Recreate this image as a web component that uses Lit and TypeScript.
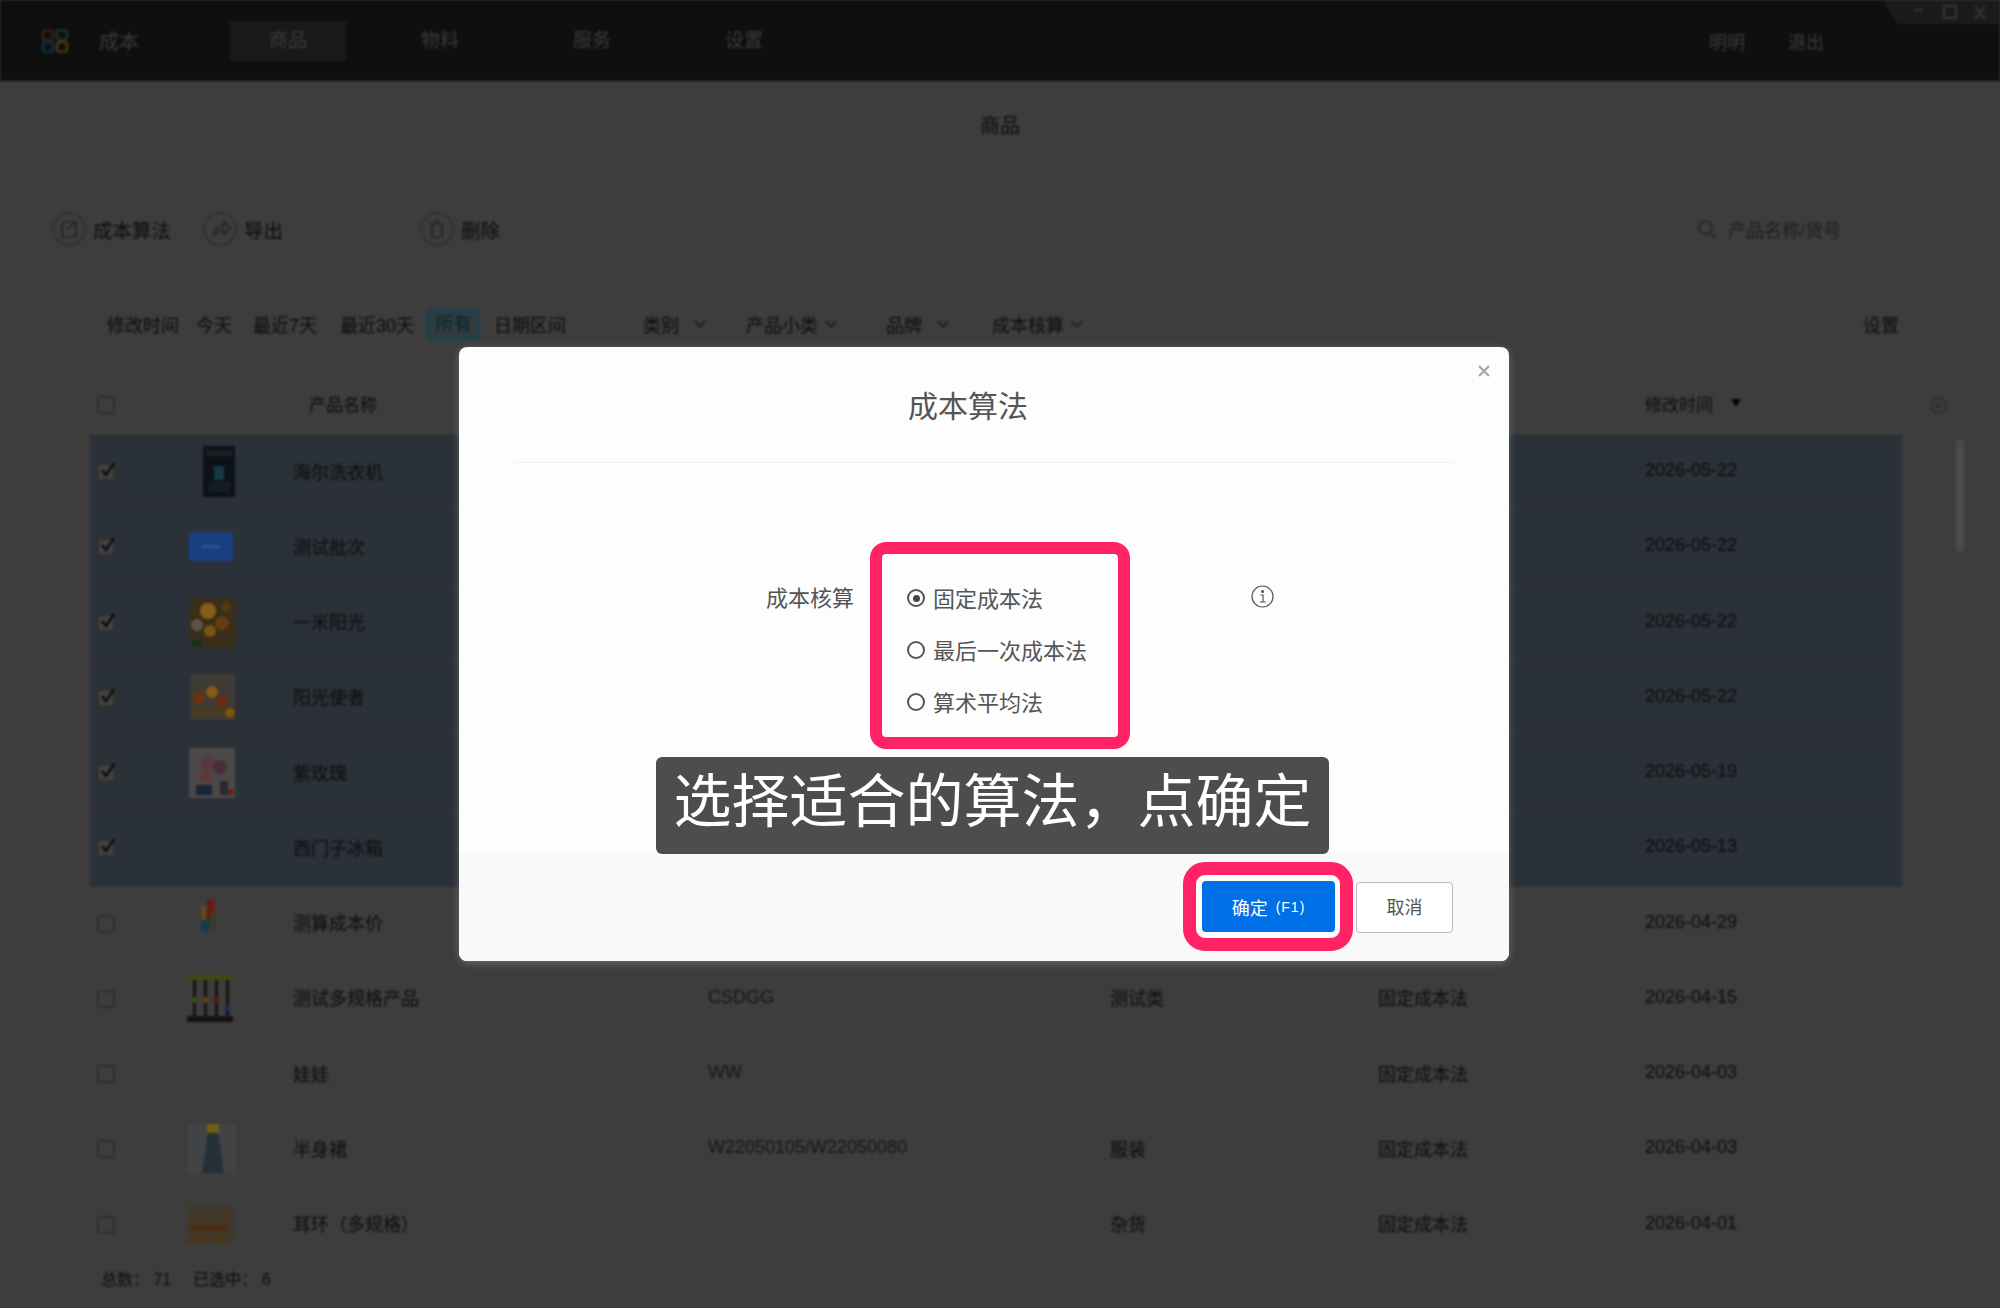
import { LitElement, html, svg, css } from "lit";
import { customElement } from "lit/decorators.js";

type Row = {
  name: string;
  code?: string;
  cat?: string;
  method?: string;
  date: string;
  on?: boolean;
  thumb?: any;
};

const THUMBS = {
  poster: svg`<rect x="19" y="4" width="32" height="51" fill="#0c1218"/><rect x="30" y="24" width="10" height="14" fill="#143a44"/><rect x="22" y="8" width="26" height="6" fill="#1c2024"/><rect x="24" y="40" width="22" height="10" fill="#161c24"/>`,
  blue: svg`<rect x="5" y="15" width="44" height="29" rx="2" fill="#193f80"/><rect x="18" y="28" width="18" height="3" fill="#2c5290"/>`,
  sun: svg`<rect x="6" y="5" width="46" height="50" fill="#3a2e1a"/><circle cx="24" cy="18" r="8" fill="#855f16"/><circle cx="38" cy="30" r="7" fill="#653c10"/><circle cx="13" cy="32" r="6" fill="#5c5648"/><circle cx="26" cy="38" r="6" fill="#7a5414"/><circle cx="42" cy="14" r="5" fill="#4e3a14"/><rect x="8" y="47" width="10" height="7" fill="#183020"/>`,
  box: svg`<rect x="6" y="6" width="45" height="46" fill="#3e3b34"/><circle cx="15" cy="30" r="6" fill="#702f10"/><circle cx="28" cy="24" r="6" fill="#855a14"/><circle cx="38" cy="33" r="6" fill="#6a2a10"/><rect x="10" y="40" width="30" height="7" fill="#483c1a"/><circle cx="46" cy="45" r="5" fill="#80540a"/>`,
  rose: svg`<rect x="5" y="5" width="46" height="50" fill="#4c4847"/><circle cx="24" cy="20" r="7" fill="#573840"/><circle cx="36" cy="24" r="7" fill="#4a2c38"/><circle cx="22" cy="33" r="6" fill="#5c3a3a"/><rect x="12" y="42" width="16" height="10" fill="#18263a"/><rect x="36" y="38" width="8" height="14" fill="#2a2a34"/><circle cx="47" cy="49" r="3" fill="#642014"/>`,
  abacus: svg`<rect x="17" y="12" width="5" height="24" fill="#644816"/><rect x="23" y="6" width="5" height="30" fill="#641a14"/><rect x="28" y="3" width="3" height="36" fill="#6e2214"/><rect x="17" y="26" width="8" height="12" fill="#163c55"/><rect x="26" y="20" width="4" height="18" fill="#22482e"/>`,
  beads: svg`<rect x="3" y="6" width="46" height="5" fill="#3c4a10"/><rect x="3" y="47" width="46" height="6" fill="#141414"/><rect x="9" y="11" width="3" height="36" fill="#141414"/><rect x="20" y="11" width="3" height="36" fill="#141414"/><rect x="31" y="11" width="3" height="36" fill="#141414"/><rect x="42" y="11" width="3" height="36" fill="#141414"/><rect x="8" y="28" width="5" height="6" fill="#324814"/><rect x="19" y="28" width="5" height="6" fill="#623c0c"/><rect x="30" y="28" width="5" height="6" fill="#5a1a14"/><rect x="41" y="36" width="5" height="6" fill="#143055"/>`,
  skirt: svg`<rect x="3" y="5" width="49" height="50" fill="#414345"/><rect x="23" y="5" width="12" height="9" fill="#6e6210"/><polygon points="24,14 34,14 40,54 18,54" fill="#242f38"/>`,
  ring: svg`<rect x="3" y="11" width="46" height="38" fill="#42382a"/><rect x="8" y="29" width="36" height="7" fill="#4a2c14"/><rect x="10" y="40" width="10" height="6" fill="#4a3416"/><rect x="30" y="40" width="10" height="6" fill="#4a3416"/>`,
};

const ROWS: Row[] = [
  { name: "海尔洗衣机", date: "2026-05-22", on: true, thumb: THUMBS.poster },
  { name: "测试批次", date: "2026-05-22", on: true, thumb: THUMBS.blue },
  { name: "一米阳光", date: "2026-05-22", on: true, thumb: THUMBS.sun },
  { name: "阳光使者", date: "2026-05-22", on: true, thumb: THUMBS.box },
  { name: "紫玫瑰", date: "2026-05-19", on: true, thumb: THUMBS.rose },
  { name: "西门子冰箱", date: "2026-05-13", on: true },
  { name: "测算成本价", date: "2026-04-29", thumb: THUMBS.abacus },
  { name: "测试多规格产品", code: "CSDGG", cat: "测试类", method: "固定成本法", date: "2026-04-15", thumb: THUMBS.beads },
  { name: "娃娃", code: "WW", method: "固定成本法", date: "2026-04-03" },
  { name: "半身裙", code: "W22050105/W22050080", cat: "服装", method: "固定成本法", date: "2026-04-03", thumb: THUMBS.skirt },
  { name: "耳环（多规格）", cat: "杂货", method: "固定成本法", date: "2026-04-01", thumb: THUMBS.ring },
];

const chevron = html`<svg class="chev" viewBox="0 0 12 8"><path d="M1 1l5 6 5-6" fill="none" stroke="#1c1c1c" stroke-width="1.6"/></svg>`;

@customElement("app-root")
export class AppRoot extends LitElement {
  static styles = css`
    :host {
      display: block;
      position: relative;
      width: 2000px;
      height: 1308px;
      overflow: hidden;
      background: #3d3d3d;
      font-family: "Liberation Sans", "Noto Sans CJK SC", sans-serif;
    }
    .page {
      width: 2000px;
      height: 1308px;
      color: #0c0c0c;
      font-size: 18px;
      filter: blur(1px);
    }
    .topbar {
      height: 81px;
      background: #0f0f0f;
      display: flex;
      align-items: center;
      padding: 0 176px 0 41px;
      box-sizing: border-box;
      color: #3c3c3c;
    }
    .logo {
      width: 28px;
      height: 24px;
    }
    .brand {
      margin-left: 30px;
      font-size: 20px;
    }
    .nav {
      display: flex;
      gap: 36px;
      margin-left: 91px;
    }
    .tab {
      width: 116px;
      height: 40px;
      line-height: 40px;
      text-align: center;
      font-size: 19px;
    }
    .tab.active {
      background: #191919;
    }
    .user {
      margin-left: auto;
      display: flex;
      gap: 43px;
    }
    .winctl {
      position: absolute;
      top: 0;
      right: 0;
      width: 117px;
      height: 24px;
      background: #1b1b1b;
      clip-path: polygon(0 0, 100% 0, 100% 100%, 14px 100%);
    }
    .title {
      height: 90px;
      line-height: 90px;
      text-align: center;
      font-size: 20px;
    }
    .toolbar {
      height: 116px;
      display: grid;
      grid-template-columns: 151px 217px 1fr 277px;
      align-items: center;
      padding: 0 37px 0 52px;
      box-sizing: border-box;
    }
    .tool {
      display: flex;
      align-items: center;
      gap: 7px;
      font-size: 19.5px;
    }
    .tool svg {
      width: 34px;
      height: 34px;
    }
    .search {
      grid-column: 4;
      height: 44px;
      border: 1px solid #434343;
      border-radius: 22px;
      box-sizing: border-box;
      display: flex;
      align-items: center;
      gap: 11px;
      padding-left: 10px;
      color: #1e1e1e;
    }
    .search svg {
      width: 20px;
      height: 20px;
    }
    .filters {
      height: 74px;
      display: grid;
      grid-template-columns: 89px 57px 87px 87px 67px 149px 103px 140px 106px 1fr auto;
      align-items: center;
      padding: 0 101px 0 107px;
      box-sizing: border-box;
    }
    .filters .all {
      width: 53px;
      height: 31px;
      line-height: 27px;
      box-sizing: border-box;
      text-align: center;
      border: 2px solid #0c4660;
      border-radius: 5px;
      background: #323a3e;
      color: #052433;
    }
    .dd {
      display: flex;
      align-items: center;
      gap: 7px;
    }
    .dd.wide {
      gap: 15px;
    }
    .chev {
      width: 12px;
      height: 8px;
    }
    .table-area {
      display: grid;
      grid-template-columns: 1812px 1fr;
      padding-left: 90px;
    }
    .row {
      display: grid;
      grid-template-columns: 94px 109px 415px 402px 268px 267px 1fr;
      align-items: center;
      height: 75.25px;
      border-bottom: 1px solid #414141;
      box-sizing: border-box;
    }
    .row.on {
      background: #2b3138;
      border-bottom-color: #33363b;
    }
    .row.head {
      height: 74px;
      padding-top: 13px;
      border: none;
      font-size: 17px;
    }
    .row.head .name {
      padding-left: 16px;
      margin-top: -3px;
    }
    .row .cell-name {
      margin-top: -3px;
    }
    .check {
      width: 18px;
      height: 18px;
      margin-left: 7px;
      border: 2px solid #303030;
      border-radius: 3px;
      box-sizing: border-box;
      position: relative;
    }
    .row.on .check {
      background: #424242;
    }
    .check svg {
      position: absolute;
      left: -1px;
      top: -5px;
      width: 20px;
      height: 20px;
    }
    .thumb {
      display: block;
      width: 56px;
      height: 60px;
    }
    .sort {
      display: flex;
      align-items: center;
      gap: 18px;
      margin-top: -3px;
    }
    .sort i {
      border-left: 5px solid transparent;
      border-right: 5px solid transparent;
      border-top: 8px solid #050505;
    }
    .date {
      margin-top: -3px;
    }
    .code {
      margin-top: -3px;
      color: #161616;
    }
    .side {
      padding-left: 28px;
    }
    .gear {
      display: block;
      width: 17px;
      height: 17px;
      margin-top: 36px;
    }
    .bar {
      width: 8px;
      height: 113px;
      margin: 25px 0 0 26px;
      border-radius: 4px;
      background: #4b4b4b;
    }
    .stats {
      display: flex;
      gap: 22px;
      padding: 3px 0 0 101px;
      font-size: 16px;
    }
    .modal {
      position: absolute;
      left: 459px;
      top: 347px;
      width: 1050px;
      height: 614px;
      background: #fdfdfd;
      border-radius: 8px;
      box-shadow: 0 2px 8px rgba(190, 190, 190, 0.35);
      display: flex;
      flex-direction: column;
      color: #555;
    }
    .close {
      position: absolute;
      right: 19px;
      top: 18px;
      width: 12px;
      height: 12px;
    }
    .m-head {
      height: 116px;
      margin: 0 56px;
      padding: 30px 32px 0 0;
      box-sizing: border-box;
      border-bottom: 1px solid #eeeeee;
      text-align: center;
      font-size: 30px;
      line-height: 60px;
    }
    .form {
      display: flex;
      align-items: flex-start;
      margin-top: 79px;
      padding-left: 307px;
      font-size: 22px;
    }
    .label {
      width: 88px;
      margin: 42px 16px 0 0;
      line-height: 30px;
      white-space: nowrap;
    }
    .pick {
      width: 260px;
      height: 207px;
      box-sizing: border-box;
      border: 12px solid #ff2366;
      border-radius: 16px;
      padding: 29px 0 0 25px;
      display: flex;
      flex-direction: column;
      gap: 22px;
    }
    .opt {
      display: flex;
      align-items: center;
      gap: 8px;
      height: 30px;
      white-space: nowrap;
    }
    .opt b {
      font-weight: 400;
      margin-top: -2px;
    }
    .radio {
      width: 18px;
      height: 18px;
      box-sizing: border-box;
      border: 2px solid #555;
      border-radius: 50%;
      display: flex;
      align-items: center;
      justify-content: center;
    }
    .radio.sel::after {
      content: "";
      width: 7px;
      height: 7px;
      border-radius: 50%;
      background: #444;
    }
    .info {
      width: 23px;
      height: 23px;
      margin: 43px 0 0 121px;
    }
    .caption {
      position: absolute;
      left: 197px;
      top: 410px;
      width: 673px;
      height: 97px;
      box-sizing: border-box;
      padding-bottom: 17px;
      border-radius: 6px;
      background: #4d4d4d;
      color: #fff;
      font-size: 58px;
      display: flex;
      align-items: center;
      justify-content: center;
      white-space: nowrap;
    }
    .m-foot {
      margin-top: auto;
      height: 109px;
      background: #f9f9f9;
      border-radius: 0 0 8px 8px;
      display: flex;
      justify-content: flex-end;
      align-items: flex-start;
      gap: 3px;
      padding: 10px 56px 0 0;
      box-sizing: border-box;
    }
    .focus {
      border: 13px solid #ff2366;
      border-radius: 22px;
      padding: 6px 5px 6px 6px;
      background: #fdfdfd;
    }
    .btn {
      height: 51px;
      box-sizing: border-box;
      border-radius: 4px;
      display: flex;
      align-items: center;
      justify-content: center;
      font-size: 18px;
    }
    .ok {
      width: 133px;
      background: #0070e8;
      color: #fff;
      gap: 8px;
    }
    .ok small {
      font-size: 14px;
      letter-spacing: 1px;
    }
    .cancel {
      width: 97px;
      margin-top: 20px;
      padding-bottom: 3px;
      background: #fff;
      border: 1px solid #bbb;
    }
  `;

  renderRow(r: Row) {
    return html`
      <div class="row ${r.on ? "on" : ""}">
        <div class="check">
          ${r.on
            ? html`<svg viewBox="0 0 20 20"><path d="M4 10l4 5 8-12" fill="none" stroke="#0a0a0a" stroke-width="2.4"/></svg>`
            : ""}
        </div>
        <div>${r.thumb ? html`<svg class="thumb" viewBox="0 0 56 60">${r.thumb}</svg>` : ""}</div>
        <div class="cell-name">${r.name}</div>
        <div class="code">${r.code ?? ""}</div>
        <div class="cell-name">${r.cat ?? ""}</div>
        <div class="cell-name">${r.method ?? ""}</div>
        <div class="date">${r.date}</div>
      </div>
    `;
  }

  render() {
    return html`
      <div class="page">
        <header class="topbar">
          <svg class="logo" viewBox="0 0 28 24">
            <rect x="2" y="1" width="10" height="10" rx="3" fill="none" stroke="#3c1a18" stroke-width="3"/>
            <rect x="16" y="1" width="10" height="10" rx="3" fill="none" stroke="#16331e" stroke-width="3"/>
            <rect x="2" y="13" width="10" height="10" rx="3" fill="none" stroke="#0f2c40" stroke-width="3"/>
            <rect x="16" y="13" width="10" height="10" rx="3" fill="none" stroke="#4a340c" stroke-width="3"/>
          </svg>
          <div class="brand">成本</div>
          <nav class="nav">
            <div class="tab active">商品</div>
            <div class="tab">物料</div>
            <div class="tab">服务</div>
            <div class="tab">设置</div>
          </nav>
          <div class="user"><span>明明</span><span>退出</span></div>
        </header>
        <div class="winctl">
          <svg width="117" height="24" viewBox="0 0 117 24">
            <path d="M31 10h9" stroke="#363636" stroke-width="2"/>
            <rect x="61" y="6" width="12" height="12" rx="2" fill="none" stroke="#363636" stroke-width="2"/>
            <path d="M92 7l10 12M102 7l-10 12" stroke="#363636" stroke-width="2"/>
          </svg>
        </div>
        <div class="title">商品</div>
        <div class="toolbar">
          <div class="tool">
            <svg viewBox="0 0 34 34" fill="none" stroke="#242424" stroke-width="1.6">
              <circle cx="17" cy="17" r="16" stroke="#303030"/>
              <rect x="10" y="10" width="14" height="15" rx="2"/>
              <path d="M15 18l9-9"/>
            </svg>
            成本算法
          </div>
          <div class="tool">
            <svg viewBox="0 0 34 34" fill="none" stroke="#242424" stroke-width="1.6">
              <circle cx="17" cy="17" r="16" stroke="#303030"/>
              <path d="M10 24c1-7 5-10 11-10v-4l6 6-6 6v-4c-5 0-8 2-11 6z"/>
            </svg>
            导出
          </div>
          <div class="tool">
            <svg viewBox="0 0 34 34" fill="none" stroke="#242424" stroke-width="1.6">
              <circle cx="17" cy="17" r="16" stroke="#303030"/>
              <path d="M12 12h10v13h-10zM14 9h6M10 12h14"/>
            </svg>
            删除
          </div>
          <div class="search">
            <svg viewBox="0 0 20 20" fill="none" stroke="#242424" stroke-width="1.6">
              <circle cx="8.5" cy="8.5" r="6.5"/>
              <path d="M13 13l5 6"/>
            </svg>
            产品名称/货号
          </div>
        </div>
        <div class="filters">
          <div>修改时间</div>
          <div>今天</div>
          <div>最近7天</div>
          <div>最近30天</div>
          <div class="all">所有</div>
          <div>日期区间</div>
          <div class="dd wide">类别${chevron}</div>
          <div class="dd">产品小类${chevron}</div>
          <div class="dd wide">品牌${chevron}</div>
          <div class="dd">成本核算${chevron}</div>
          <div>设置</div>
        </div>
        <div class="table-area">
          <div>
            <div class="row head">
              <div class="check"></div>
              <div></div>
              <div class="name">产品名称</div>
              <div></div>
              <div></div>
              <div></div>
              <div class="sort">修改时间<i></i></div>
            </div>
            ${ROWS.map((r) => this.renderRow(r))}
          </div>
          <div class="side">
            <svg class="gear" viewBox="0 0 17 17" fill="none" stroke="#2c2c2c" stroke-width="1.5">
              <circle cx="8.5" cy="8.5" r="7.5"/>
              <circle cx="8.5" cy="8.5" r="2.5"/>
            </svg>
            <div class="bar"></div>
          </div>
        </div>
        <div class="stats"><span>总数： 71</span><span>已选中： 6</span></div>
      </div>

      <section class="modal">
        <svg class="close" viewBox="0 0 12 12">
          <path d="M1 1l10 10M11 1L1 11" stroke="#aaa" stroke-width="2.4"/>
        </svg>
        <div class="m-head">成本算法</div>
        <div class="form">
          <div class="label">成本核算</div>
          <div class="pick">
            <div class="opt"><span class="radio sel"></span><b>固定成本法</b></div>
            <div class="opt"><span class="radio"></span><b>最后一次成本法</b></div>
            <div class="opt"><span class="radio"></span><b>算术平均法</b></div>
          </div>
          <svg class="info" viewBox="0 0 23 23" fill="none" stroke="#555" stroke-width="1.2">
            <circle cx="11.5" cy="11.5" r="10.5"/>
            <path d="M9.5 10h2.5v7M9 17h6"/>
            <circle cx="11.5" cy="6.5" r="0.9" fill="#555"/>
          </svg>
        </div>
        <div class="caption">选择适合的算法，点确定</div>
        <div class="m-foot">
          <div class="focus">
            <div class="btn ok">确定<small>(F1)</small></div>
          </div>
          <div class="btn cancel">取消</div>
        </div>
      </section>
    `;
  }
}
